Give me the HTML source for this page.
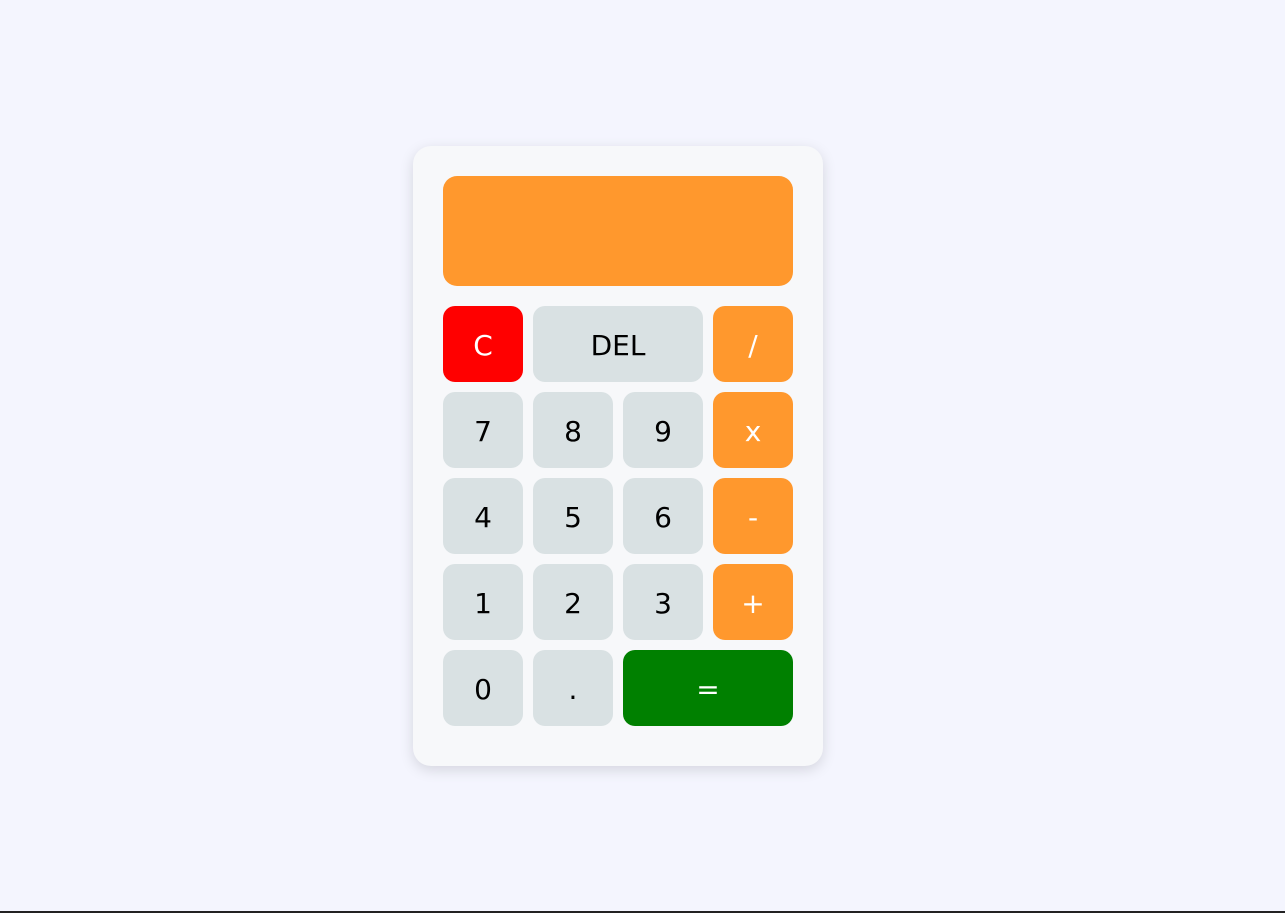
<!DOCTYPE html>
<html><head><meta charset="utf-8"><style>
html,body{margin:0;padding:0}
body{width:1285px;height:913px;background:#f4f5fe;position:relative;overflow:hidden;font-family:"DejaVu Sans","Liberation Sans",sans-serif}
.bar{position:absolute;left:0;bottom:0;width:1285px;height:2px;background:#222}
.card{position:absolute;left:413px;top:146px;width:410px;height:620px;background:#f7f8fa;border-radius:18px;box-shadow:0 4px 14px rgba(0,0,0,0.13)}
.disp{position:absolute;left:30px;top:30px;width:350px;height:110px;background:#ff982d;border-radius:14px}
.b{position:absolute;width:80px;height:76px;box-sizing:border-box;padding-top:3px;border-radius:12px;background:#d9e1e3;color:#000;font-size:28px;display:flex;align-items:center;justify-content:center}
.o{background:#ff982d;color:#fff}
</style></head><body>
<div class="card">
<div class="disp"></div>
<div class="b" style="left:30px;top:160px;background:#ff0000;color:#fff">C</div>
<div class="b" style="left:120px;top:160px;width:170px">DEL</div>
<div class="b o" style="left:300px;top:160px">/</div>
<div class="b" style="left:30px;top:246px">7</div>
<div class="b" style="left:120px;top:246px">8</div>
<div class="b" style="left:210px;top:246px">9</div>
<div class="b o" style="left:300px;top:246px">x</div>
<div class="b" style="left:30px;top:332px">4</div>
<div class="b" style="left:120px;top:332px">5</div>
<div class="b" style="left:210px;top:332px">6</div>
<div class="b o" style="left:300px;top:332px">-</div>
<div class="b" style="left:30px;top:418px">1</div>
<div class="b" style="left:120px;top:418px">2</div>
<div class="b" style="left:210px;top:418px">3</div>
<div class="b o" style="left:300px;top:418px">+</div>
<div class="b" style="left:30px;top:504px">0</div>
<div class="b" style="left:120px;top:504px">.</div>
<div class="b" style="left:210px;top:504px;width:170px;background:#008000;color:#fff">=</div>
</div>
<div class="bar"></div>
</body></html>
